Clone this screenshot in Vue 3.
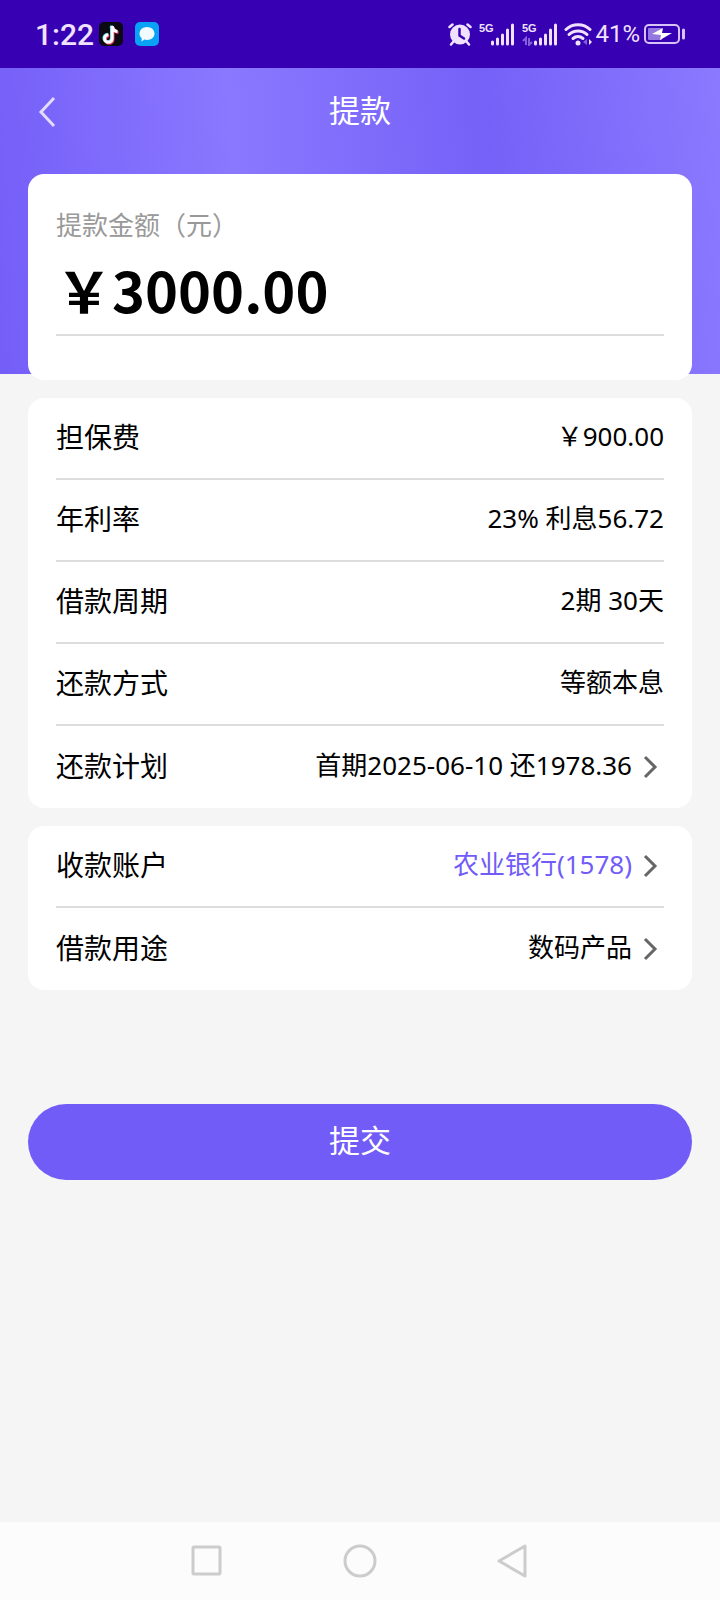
<template>
  <div class="page">
    <div class="status-bar">
      <div class="status-left">
        <span class="status-time">1:22</span>
        <svg class="app-icon" viewBox="0 0 24 24" aria-hidden="true">
          <rect width="24" height="24" rx="5" fill="#0b0a12" />
          <g fill="none" stroke-width="3">
            <path d="M12.500 3.500v12.500a3.800 3.800 0 1 1-3.800-3.800M12 4.500c.4 2.800 2.200 4.200 5 4.400" stroke="#4fd8e0" />
            <path d="M14 5v12.500a3.800 3.800 0 1 1-3.800-3.800M14.500 6c.4 2.800 2.200 4.200 5 4.400" stroke="#e8385c" />
            <path d="M13.200 4v12.500a3.800 3.800 0 1 1-3.800-3.800M13.500 5c.4 2.800 2.200 4.200 5 4.400" stroke="#fff" />
          </g>
        </svg>
        <svg class="app-icon chat" viewBox="0 0 24 24" aria-hidden="true">
          <rect width="24" height="24" rx="5" fill="#08a3f5" />
          <path d="M12 5c4.200 0 7.500 2.800 7.500 6.500S16.200 18 12 18c-.9 0-1.800-.1-2.600-.4L6.500 19.500l.2-3.200C5.300 15.100 4.500 13.400 4.500 11.500 4.500 7.800 7.800 5 12 5z" fill="#f2fbff" />
        </svg>
      </div>

      <div class="status-right">
        <svg class="alarm" viewBox="0 0 24 24" aria-hidden="true">
          <circle cx="12" cy="12.500" r="10" fill="#f0e2ff" />
          <path d="M1.500 5L4.500 2.500M22.500 5L19.500 2.500M5.500 19.500L3 22.500M18.500 19.500l2.500 3" stroke="#f0e2ff" stroke-width="2.500" fill="none" stroke-linecap="round" />
          <path d="M11.500 7v6.500l4.500 3" stroke="#3700b3" stroke-width="2.500" fill="none" stroke-linecap="round" />
        </svg>
        <svg v-for="n in 2" :key="n" class="signal" viewBox="0 0 36 24">
          <text class="signal-text" x="0" y="10" fill="#f0e2ff">5G</text>
          <path d="M13.500 20v2M18.500 17v5M23.500 13v9M28.500 8v14M33.500 3v19" stroke="#f0e2ff" stroke-width="3" stroke-linecap="round" />
          <path v-if="n === 2" d="M4 23v-7l-3 3M7 16v7l3-3" stroke="#8560dc" stroke-width="2" fill="none" />
        </svg>
        <svg class="wifi" viewBox="0 0 28 24" aria-hidden="true">
          <g fill="none" stroke="#f0e2ff" stroke-width="3" stroke-linecap="round">
            <path d="M2 7.500c6.500-6.500 17.500-6.500 24 0" />
            <path d="M5 12.500c5-4.800 13-4.800 18 0" />
            <path d="M9 16.500c3-2.600 7-2.600 10 0" />
          </g>
          <circle cx="14" cy="21" r="2.500" fill="#f0e2ff" />
          <path d="M23 17v6l-4-3z" fill="#8560dc" />
          <path d="M25 17v6l3-3z" fill="#f0e2ff" />
        </svg>
        <span class="battery-text">41%</span>
        <svg class="battery" viewBox="0 0 42 22" aria-hidden="true">
          <rect x="1" y="2" width="34" height="18" rx="4" fill="none" stroke="#d8c2fa" stroke-width="2" />
          <rect x="4" y="5" width="14" height="12" rx="1" fill="#9478e0" />
          <path d="M8 11l11-6-1 5h10l-12 7 1-5z" fill="#fff" />
          <path d="M39.500 7v8" stroke="#d8c2fa" stroke-width="3" stroke-linecap="round" />
        </svg>
      </div>
    </div>

    <header class="header">
      <div class="nav">
        <button type="button" class="nav-back" aria-label="返回">
          <svg viewBox="0 0 24 36"><path d="M18 4L5 18l13 14" /></svg>
        </button>
        <h1 class="nav-title">提款</h1>
      </div>
    </header>

    <main class="content">
      <section class="card amount-card">
        <p class="amount-label">提款金额（元）</p>
        <p class="amount-value">{{ yen }}{{ amount }}</p>
      </section>

      <section v-for="(group, i) in groups" :key="i" class="card">
        <component
          :is="row.link ? 'button' : 'div'"
          v-for="row in group"
          :key="row.label"
          :type="row.link ? 'button' : null"
          class="row"
        >
          <span class="row-label">{{ row.label }}</span>
          <span class="row-value" :class="{ primary: row.primary }">{{ row.value }}</span>
          <svg v-if="row.link" class="row-arrow" viewBox="0 0 32 32"><path d="M13 6l10 10-10 10" /></svg>
        </component>
      </section>

      <button type="button" class="submit-btn">提交</button>
    </main>

    <nav class="system-nav">
      <button type="button" class="system-btn" aria-label="最近任务">
        <svg viewBox="0 0 36 36"><rect x="4" y="4" width="27" height="27" rx="1" /></svg>
      </button>
      <button type="button" class="system-btn" aria-label="主屏幕">
        <svg viewBox="0 0 36 36"><circle cx="18" cy="18" r="15" /></svg>
      </button>
      <button type="button" class="system-btn" aria-label="后退">
        <svg viewBox="0 0 36 36"><path d="M4 18L30 3v30z" /></svg>
      </button>
    </nav>
  </div>
</template>

<script setup>
import { ref } from 'vue'

// full-width yen sign
const yen = '\uFFE5'

const amount = ref('3000.00')

const groups = ref([
  [
    { label: '担保费', value: yen + '900.00' },
    { label: '年利率', value: '23% 利息56.72' },
    { label: '借款周期', value: '2期 30天' },
    { label: '还款方式', value: '等额本息' },
    { label: '还款计划', value: '首期2025-06-10 还1978.36', link: true }
  ],
  [
    { label: '收款账户', value: '农业银行(1578)', link: true, primary: true },
    { label: '借款用途', value: '数码产品', link: true }
  ]
])
</script>

<style>
body {
  margin: 0;
  background: #f5f5f5;
}
</style>

<style scoped>
.page {
  display: flex;
  flex-direction: column;
  min-height: 100vh;
  background: #f5f5f5;
  color: #000;
  font-family: "Noto Sans", "Noto Sans CJK SC", sans-serif;
}

button {
  margin: 0;
  padding: 0;
  border: none;
  background: none;
  color: inherit;
  font-family: inherit;
  cursor: pointer;
}

svg {
  display: block;
  flex-shrink: 0;
}

.status-bar {
  display: flex;
  align-items: center;
  justify-content: space-between;
  height: 68px;
  padding: 0 34px 0 35px;
  background: #3700b3;
  color: #f0e2ff;
  font-family: Roboto, sans-serif;
}

.status-left, .status-right {
  display: flex;
  align-items: center;
}

.status-time {
  margin-right: 5px;
  font-size: 30px;
  font-weight: 500;
}

.app-icon {
  width: 24px;
  height: 24px;
}
.app-icon.chat { margin-left: 12px; }

.alarm {
  width: 24px;
  height: 24px;
}

.signal {
  width: 36px;
  height: 24px;
  margin-left: 7px;
}

.signal-text {
  font-family: "Liberation Sans Narrow", "Liberation Sans", sans-serif;
  font-size: 11px;
  font-weight: 700;
}

.wifi {
  width: 28px;
  height: 24px;
  margin: 0 3px 0 6px;
}

.battery-text { font-size: 24px; }

.battery {
  width: 42px;
  height: 22px;
  margin-left: 4px;
}

.header {
  height: 306px;
  background: linear-gradient(85deg, #745ef8 0%, #8a78ff 34%, #7561f7 68%, #8b79ff 100%);
}

.nav {
  display: grid;
  grid-template-columns: 88px 1fr 88px;
  align-items: center;
  height: 88px;
}

.nav-back {
  height: 88px;
  padding-left: 36px;
}
.nav-back svg {
  width: 24px;
  height: 36px;
  fill: none;
  stroke: #e2dcff;
  stroke-width: 3px;
}

.nav-title {
  margin: 0;
  padding-bottom: 8px;
  color: #fff;
  font-size: 31px;
  font-weight: 400;
  text-align: center;
}

/* first card overlaps the purple header */
.content {
  display: flex;
  flex-direction: column;
  flex: 1;
  gap: 18px;
  margin-top: -200px;
  padding: 0 28px;
}

.card {
  padding: 0 28px;
  border-radius: 16px;
  background: #fff;
}

.amount-card { padding: 32px 28px 44px; }

.amount-label {
  margin: 0;
  color: #999;
  font-size: 26px;
  line-height: 38px;
}

.amount-value {
  margin: 0;
  border-bottom: 2px solid #dcdcdc;
  font-family: "Noto Sans CJK SC", sans-serif;
  font-size: 56px;
  font-weight: 700;
  line-height: 90px;
}

.row {
  box-sizing: border-box;
  display: flex;
  align-items: center;
  width: 100%;
  height: 82px;
  border-bottom: 2px solid #dcdcdc;
  text-align: left;
}
.row:last-child { border-bottom: none; }

.row-label {
  flex: 1;
  padding-bottom: 2px;
  font-size: 28px;
  line-height: 40px;
}

.row-value {
  padding-bottom: 4px;
  font-size: 26px;
  line-height: 40px;
}
.row-value.primary { color: #725cf8; }

.row-arrow {
  width: 32px;
  height: 32px;
  fill: none;
  stroke: #666;
  stroke-width: 3px;
}

.submit-btn {
  height: 76px;
  margin-top: 96px;
  padding-bottom: 8px;
  border-radius: 38px;
  background: #725cf8;
  color: #fff;
  font-size: 31px;
}

.system-nav {
  display: flex;
  justify-content: center;
  height: 78px;
  background: #fcfcfc;
}

.system-btn {
  display: flex;
  align-items: center;
  justify-content: center;
  width: 153px;
}
.system-btn svg {
  width: 36px;
  height: 36px;
  fill: none;
  stroke: #ccc;
  stroke-width: 3px;
  stroke-linejoin: round;
}
</style>
